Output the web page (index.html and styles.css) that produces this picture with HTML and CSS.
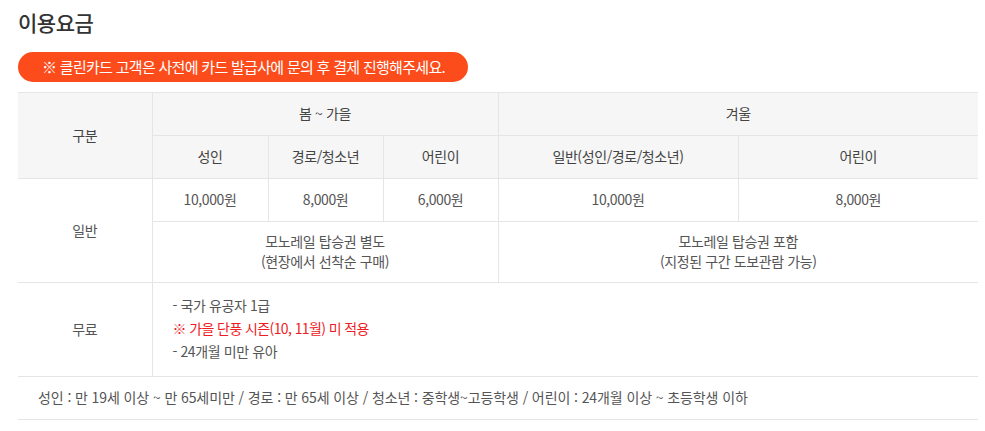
FILE: index.html
```html
<!DOCTYPE html>
<html lang="ko">
<head>
<meta charset="utf-8">
<link rel="stylesheet" href="styles.css">
</head>
<body>
<div class="wrap">
  <h2 class="title">이용요금</h2>
  <div class="notice">※ 클린카드 고객은 사전에 카드 발급사에 문의 후 결제 진행해주세요.</div>
  <table class="fee">
    <colgroup>
      <col class="c1"><col class="c2"><col class="c3"><col class="c4"><col class="c5"><col class="c6">
    </colgroup>
    <thead>
      <tr class="h">
        <th rowspan="2">구분</th>
        <th colspan="3">봄 ~ 가을</th>
        <th colspan="2">겨울</th>
      </tr>
      <tr class="h">
        <th>성인</th>
        <th>경로/청소년</th>
        <th>어린이</th>
        <th>일반(성인/경로/청소년)</th>
        <th>어린이</th>
      </tr>
    </thead>
    <tbody>
      <tr class="h">
        <td rowspan="2">일반</td>
        <td>10,000원</td>
        <td>8,000원</td>
        <td>6,000원</td>
        <td>10,000원</td>
        <td>8,000원</td>
      </tr>
      <tr class="tall">
        <td colspan="3">모노레일 탑승권 별도<br>(현장에서 선착순 구매)</td>
        <td colspan="2">모노레일 탑승권 포함<br>(지정된 구간 도보관람 가능)</td>
      </tr>
      <tr class="free">
        <td>무료</td>
        <td colspan="5" class="left">
          <ul class="list">
            <li>- 국가 유공자 1급</li>
            <li class="red">※ 가을 단풍 시즌(10, 11월) 미 적용</li>
            <li>- 24개월 미만 유아</li>
          </ul>
        </td>
      </tr>
      <tr class="h">
        <td colspan="6" class="note">성인 : 만 19세 이상 ~ 만 65세미만 / 경로 : 만 65세 이상 / 청소년 : 중학생~고등학생 / 어린이 : 24개월 이상 ~ 초등학생 이하</td>
      </tr>
    </tbody>
  </table>
</div>
</body>
</html>
```

FILE: styles.css
```css
* { box-sizing: border-box; }
html, body { margin: 0; padding: 0; background: #fff; }
body {
  font-family: "Noto Sans CJK KR", "Noto Sans", sans-serif;
  color: #555;
}
.wrap { padding: 0 7px 0 18px; }
.title {
  margin: 0;
  padding-top: 7px;
  height: 52px;
  font-size: 21px;
  font-weight: 500;
  line-height: 30px;
  color: #333;
  letter-spacing: -0.5px;
}
.notice {
  display: inline-block;
  width: 450px;
  height: 30px;
  line-height: 30px;
  border-radius: 15px;
  background: #fd4c1b;
  color: #fff;
  font-size: 15px;
  padding-left: 24px;
  letter-spacing: -0.7px;
}
.fee {
  margin-top: 10px;
  width: 960px;
  border-collapse: collapse;
  table-layout: fixed;
  border-top: 1px solid #aaa;
  font-size: 14px;
  letter-spacing: -0.4px;
}
.c1 { width: 134px; }
.c2 { width: 116px; }
.c3 { width: 115px; }
.c4 { width: 115px; }
.c5 { width: 240px; }
.c6 { width: 240px; }
.fee th, .fee td {
  border: 1px solid #e5e5e5;
  text-align: center;
  vertical-align: middle;
  padding: 0 0 2px;
  font-weight: 400;
  line-height: 20px;
}
.fee tr > :first-child { border-left: 0; }
.fee tr > :last-child { border-right: 0; }
.fee thead th { background: #f6f6f6; color: #444; }
.fee tr.h { height: 43px; }
.fee tr.tall { height: 61px; }
.fee tr.free { height: 94px; }
.fee td.left { text-align: left; padding-left: 20px; }
.list { list-style: none; margin: 0; padding: 0; }
.list li { line-height: 23px; }
.list .red { color: #ee1c25; letter-spacing: -0.6px; }
.fee td.note { text-align: left; padding-left: 20px; letter-spacing: -0.1px; }
```
